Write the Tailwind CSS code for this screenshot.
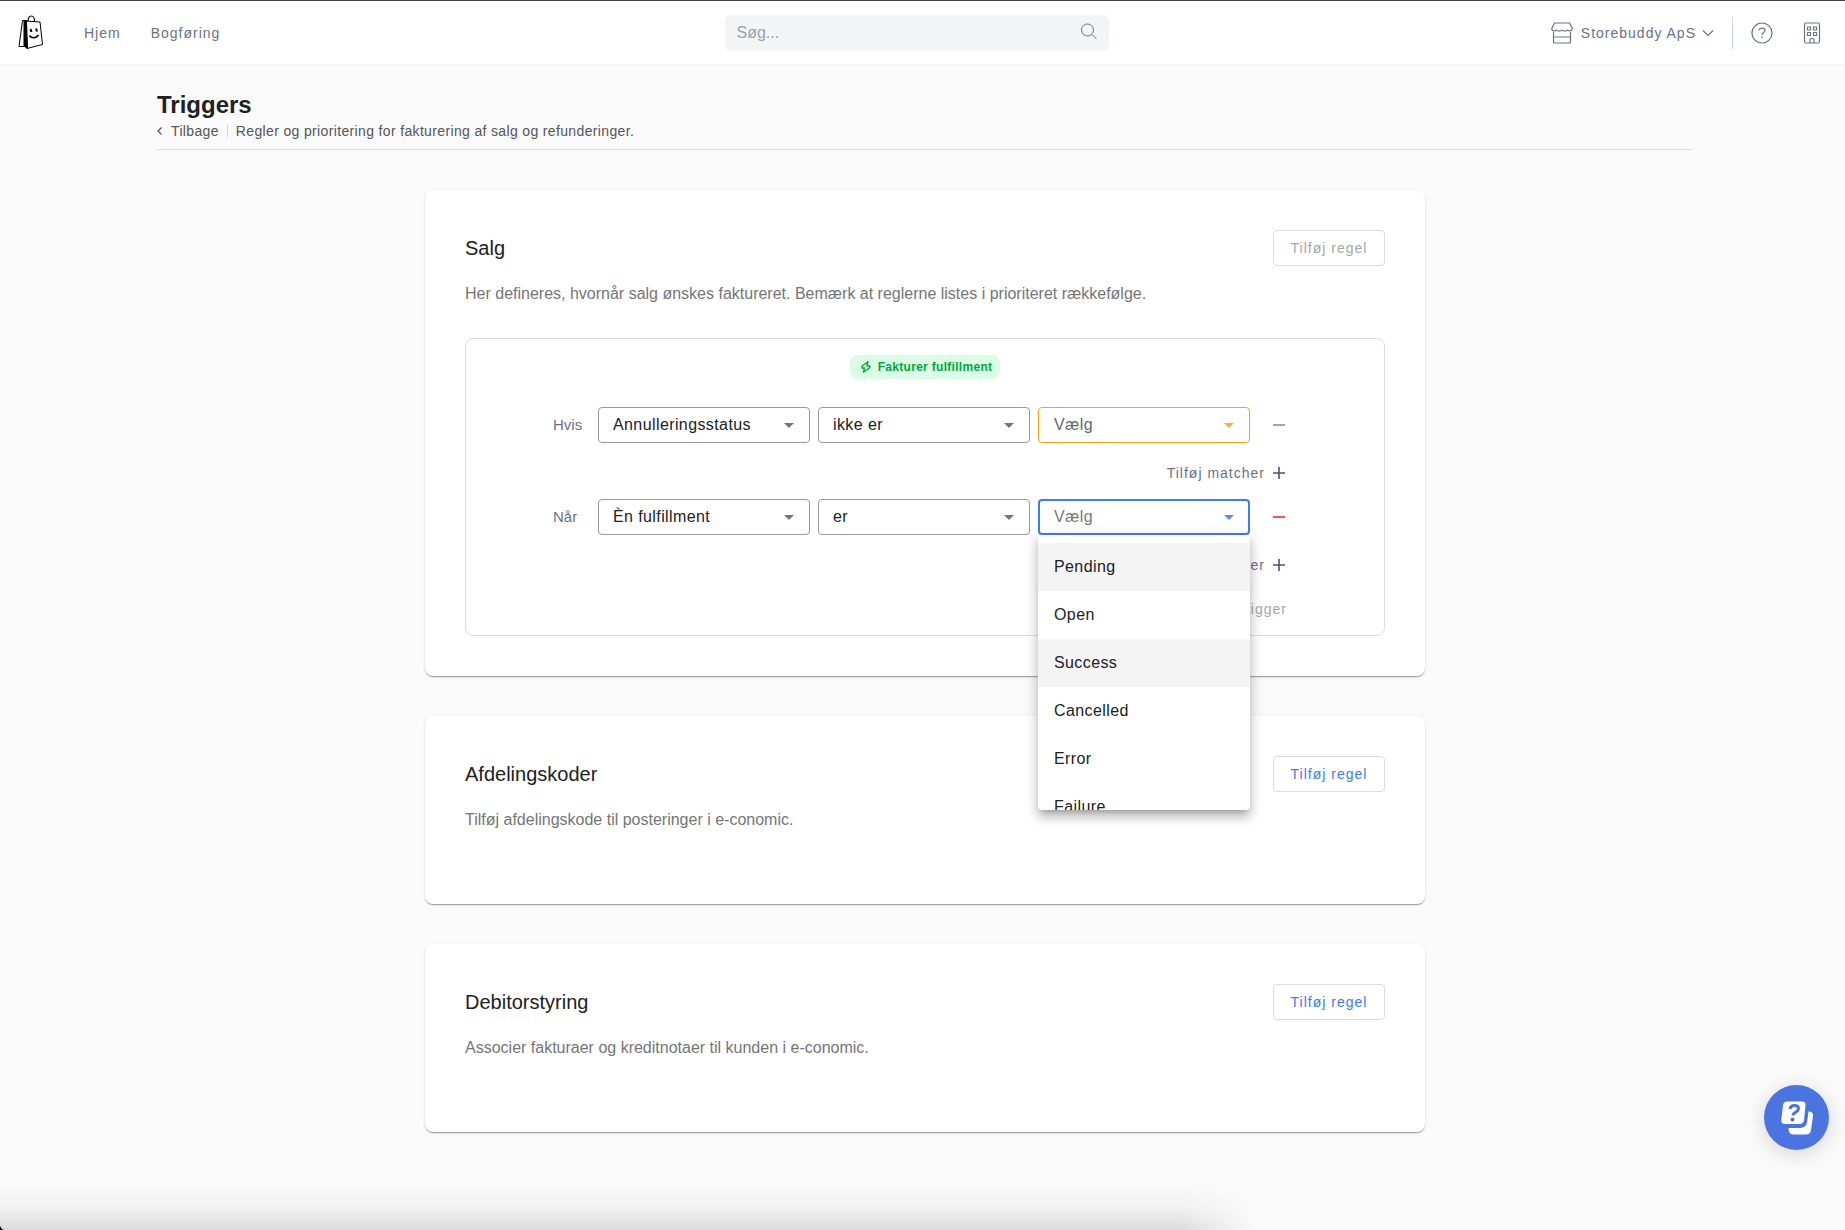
<!DOCTYPE html>
<html lang="da">
<head>
    <meta charset="UTF-8">
    <meta name="viewport" content="width=device-width, initial-scale=1.0">
    <title>Triggers</title>
    <script src="https://cdn.jsdelivr.net/npm/@tailwindcss/browser@4"></script>
</head>
<body class="relative flex flex-col min-h-screen overflow-x-hidden bg-[#fafafa] font-['Liberation_Sans',sans-serif] text-[#212121]">
    <header class="flex items-center justify-between h-[65px] pl-3 pr-6 bg-white border-t border-t-[#444] border-b border-b-gray-100 text-sm text-gray-500">
        <nav class="flex flex-1 items-center tracking-[1px]">
            <a href="#" aria-label="Storebuddy" class="ml-[3px] mr-[41px]">
                <svg class="w-7 h-9" viewBox="0 0 28 36" fill="none" stroke="#000">
                    <path d="M13 6.500C13 2.500 15 1 16.500 1S19.500 3 19.500 6" stroke-width="1.200" />
                    <path d="M10 6L25 7L27.500 29.500L12 33.500Z" fill="#fff" />
                    <path d="M9.500 5.500H7.500L4 31.500H10" />
                    <path d="M9 5.500H11.500L12.500 33.500L9 31Z" fill="#000" />
                    <path d="M14.500 20.500C16.500 23.500 21 23.500 23.500 20" stroke-width="1.600" />
                    <path d="M15.500 14L16.500 17M21 13.500L22 16.500" stroke-width="2" />
                </svg>
            </a>
            <a href="#" class="mr-[30px]">Hjem</a>
            <a href="#">Bogføring</a>
        </nav>
        <div class="relative w-96">
            <input type="search" aria-label="Søg" placeholder="Søg..." class="block w-full h-9 px-3 rounded-md bg-gray-100 text-base placeholder-gray-400 outline-none">
            <svg class="absolute right-3 top-2 w-4 h-4" viewBox="0 0 16 16" fill="none" stroke="currentColor">
                <circle cx="6.500" cy="7" r="6" />
                <path d="M11 11.500L15.500 16" />
            </svg>
        </div>
        <div class="flex flex-1 items-center justify-end">
            <button type="button" class="flex items-center tracking-[1px]">
                <svg class="w-[22px] h-[22px] mr-2" viewBox="0 0 22 22" fill="none" stroke="currentColor" stroke-width="1.200" stroke-linejoin="round">
                    <path d="M3.500 1H18.500L21.300 6.500C21.300 9.500 17.500 9.500 16.500 8C15.500 9.500 12 9.500 11 8C10 9.500 6.500 9.500 5.500 8C4.500 9.500 .7 9.500 .7 6.500Z" />
                    <path d="M2.500 10V20Q2.500 21 3.500 21H18.500Q19.500 21 19.500 20V10M2.500 15H19.500" />
                </svg>
                Storebuddy ApS
                <svg class="w-3 h-3 ml-1.5" viewBox="0 0 12 12" fill="none" stroke="currentColor" stroke-width="1.200">
                    <path d="M1 3.500L6 8.500L11 3.500" />
                </svg>
            </button>
            <span class="w-px h-8 mx-[18px] bg-gray-300"></span>
            <button type="button" aria-label="Hjælp">
                <svg class="w-[22px] h-[22px]" viewBox="0 0 22 22" fill="none" stroke="currentColor" stroke-width="1.200">
                    <circle cx="11" cy="11" r="10" />
                    <path d="M8 8.500C8 5.300 14 5.300 14 8.500C14 10.500 11 10.500 11 13" />
                    <path d="M11 14.500V16" stroke-width="1.400" />
                </svg>
            </button>
            <button type="button" aria-label="Virksomhed" class="ml-[30px]">
                <svg class="w-[18px] h-[22px]" viewBox="0 0 18 22" fill="none" stroke="currentColor" stroke-width="1.200">
                    <rect x="1.500" y="1" width="15" height="20" rx="1.500" />
                    <path d="M4.500 5h3v3h-3zM10.500 5h3v3h-3zM4.500 10.500h3v3h-3zM10.500 10.500h3v3h-3zM7 21V17.500Q7 16.500 9 16.500T11 17.500V21" />
                </svg>
            </button>
        </div>
    </header>

    <main class="w-full grow pl-[5px]">
        <div class="mx-auto max-w-[1536px] pt-6">
            <h1 class="text-2xl leading-8 font-bold">Triggers</h1>
            <div class="flex items-center h-5 text-sm tracking-wide text-[#555]">
                <a href="#" class="flex items-center">
                    <svg class="w-2 h-2 mr-1.5" viewBox="0 0 8 8" fill="none" stroke="currentColor" stroke-width="1.200">
                        <path d="M4.500 .5L1 4L4.500 7.500" />
                    </svg>
                    Tilbage
                </a>
                <span class="w-px h-3 mx-2 bg-gray-300"></span>
                <p>Regler og prioritering for fakturering af salg og refunderinger.</p>
            </div>
            <hr class="mt-2 border-[#dcdcdc]">
        </div>

        <div class="mx-auto max-w-[1000px] mt-10 flex flex-col gap-10">
            <section class="p-10 rounded-lg bg-white shadow-[0_2px_1px_-1px_rgba(0,0,0,0.2),0_1px_1px_0_rgba(0,0,0,0.14),0_1px_3px_0_rgba(0,0,0,0.12)]">
                <div class="flex items-center justify-between">
                    <h2 class="text-xl">Salg</h2>
                    <button type="button" disabled class="h-9 w-28 rounded border border-[#dcdcdc] text-sm tracking-[1px] text-[#a6a6a6]">Tilføj regel</button>
                </div>
                <p class="mt-4 mb-8 text-[#757575]">Her defineres, hvornår salg ønskes faktureret. Bemærk at reglerne listes i prioriteret rækkefølge.</p>

                <div class="rounded-lg border border-[#dcdcdc] pt-4 pb-2">
                    <div class="mx-auto flex items-center w-fit h-6 px-2 rounded-lg bg-green-100 text-xs font-bold tracking-wide text-green-600">
                        <svg class="w-3 h-3 ml-0.5 mr-1.5" viewBox="0 0 12 12" fill="none" stroke="currentColor" stroke-width="1.400" stroke-linejoin="round">
                            <path d="M8 .8L2 5.200V7H4.500L3.500 11.200L9.800 6.800V5H7Z" />
                        </svg>
                        Fakturer fulfillment
                    </div>

                    <div class="mx-auto max-w-[744px] mt-7">
                        <div class="flex items-center">
                            <span class="w-[45px] text-[15px] text-gray-500">Hvis</span>
                            <div class="grid grid-cols-3 gap-2 grow tracking-wide">
                                <div class="relative">
                                    <select aria-label="Felt" class="block w-full h-9 pl-[14px] pr-8 appearance-none rounded border border-[#999] outline-none">
                                        <option>Annulleringsstatus</option>
                                    </select>
                                    <svg class="absolute right-[9px] top-1.5 w-6 h-6 pointer-events-none text-[#757575]" viewBox="0 0 24 24" fill="currentColor"><path d="M7 10l5 5 5-5z" /></svg>
                                </div>
                                <div class="relative">
                                    <select aria-label="Operator" class="block w-full h-9 pl-[14px] pr-8 appearance-none rounded border border-[#999] outline-none">
                                        <option>ikke er</option>
                                    </select>
                                    <svg class="absolute right-[9px] top-1.5 w-6 h-6 pointer-events-none text-[#757575]" viewBox="0 0 24 24" fill="currentColor"><path d="M7 10l5 5 5-5z" /></svg>
                                </div>
                                <div class="relative">
                                    <select aria-label="Værdi" class="block w-full h-9 pl-[15px] pr-8 appearance-none rounded border border-[#f9a11b] text-[#666] outline-none">
                                        <option>Vælg</option>
                                    </select>
                                    <svg class="absolute right-[9px] top-1.5 w-6 h-6 pointer-events-none text-[#ffa73b]" viewBox="0 0 24 24" fill="currentColor"><path d="M7 10l5 5 5-5z" /></svg>
                                </div>
                            </div>
                            <button type="button" aria-label="Fjern matcher" class="flex items-center justify-center w-9 h-9 ml-[11px] text-[#a6a6a6]">
                                <svg class="w-3 h-3" viewBox="0 0 12 12" stroke="currentColor" stroke-width="2"><path d="M0 6H12" /></svg>
                            </button>
                        </div>
                        <button type="button" class="flex items-center h-9 mt-3 mb-2 ml-auto pr-3 text-sm tracking-[1px] text-gray-500">
                            Tilføj matcher
                            <svg class="w-3 h-3 ml-2 text-gray-600" viewBox="0 0 12 12" stroke="currentColor" stroke-width="1.600"><path d="M0 6H12M6 0V12" /></svg>
                        </button>

                        <div class="flex items-center">
                            <span class="w-[45px] text-[15px] text-gray-500">Når</span>
                            <div class="grid grid-cols-3 gap-2 grow tracking-wide">
                                <div class="relative">
                                    <select aria-label="Felt" class="block w-full h-9 pl-[14px] pr-8 appearance-none rounded border border-[#999] outline-none">
                                        <option>Èn fulfillment</option>
                                    </select>
                                    <svg class="absolute right-[9px] top-1.5 w-6 h-6 pointer-events-none text-[#757575]" viewBox="0 0 24 24" fill="currentColor"><path d="M7 10l5 5 5-5z" /></svg>
                                </div>
                                <div class="relative">
                                    <select aria-label="Operator" class="block w-full h-9 pl-[14px] pr-8 appearance-none rounded border border-[#999] outline-none">
                                        <option>er</option>
                                    </select>
                                    <svg class="absolute right-[9px] top-1.5 w-6 h-6 pointer-events-none text-[#757575]" viewBox="0 0 24 24" fill="currentColor"><path d="M7 10l5 5 5-5z" /></svg>
                                </div>
                                <div class="relative">
                                    <select aria-label="Værdi" class="block w-full h-9 pl-[14px] pr-8 appearance-none rounded border-2 border-[#407bf0] text-[#777] outline-none">
                                        <option>Vælg</option>
                                    </select>
                                    <svg class="absolute right-[9px] top-1.5 w-6 h-6 pointer-events-none text-[#5b8ff9]" viewBox="0 0 24 24" fill="currentColor"><path d="M7 10l5 5 5-5z" /></svg>
                                    <!-- open menu -->
                                    <ul role="listbox" aria-label="Værdi" class="absolute z-10 top-full inset-x-0 max-h-[275px] pt-2 overflow-hidden rounded-b bg-white shadow-[0_5px_5px_-3px_rgba(0,0,0,0.2),0_8px_10px_1px_rgba(0,0,0,0.14),0_3px_14px_2px_rgba(0,0,0,0.12)]">
                                        <li role="option" class="flex items-center h-12 px-4 bg-[#f4f4f4]">Pending</li>
                                        <li role="option" class="flex items-center h-12 px-4">Open</li>
                                        <li role="option" class="flex items-center h-12 px-4 bg-[#f4f4f4]">Success</li>
                                        <li role="option" class="flex items-center h-12 px-4">Cancelled</li>
                                        <li role="option" class="flex items-center h-12 px-4">Error</li>
                                        <li role="option" class="flex items-center h-12 px-4">Failure</li>
                                    </ul>
                                </div>
                            </div>
                            <button type="button" aria-label="Fjern matcher" class="flex items-center justify-center w-9 h-9 ml-[11px] text-[#fa5252]">
                                <svg class="w-3 h-3" viewBox="0 0 12 12" stroke="currentColor" stroke-width="2"><path d="M0 6H12" /></svg>
                            </button>
                        </div>
                        <button type="button" class="flex items-center h-9 mt-3 mb-2 ml-auto pr-3 text-sm tracking-[1px] text-gray-500">
                            Tilføj matcher
                            <svg class="w-3 h-3 ml-2 text-gray-600" viewBox="0 0 12 12" stroke="currentColor" stroke-width="1.600"><path d="M0 6H12M6 0V12" /></svg>
                        </button>
                        <button type="button" disabled class="flex items-center h-9 ml-auto pr-2.5 text-sm tracking-[1px] text-[#a6a6a6]">Tilføj trigger</button>
                    </div>
                </div>
            </section>

            <section class="p-10 rounded-lg bg-white shadow-[0_2px_1px_-1px_rgba(0,0,0,0.2),0_1px_1px_0_rgba(0,0,0,0.14),0_1px_3px_0_rgba(0,0,0,0.12)]">
                <div class="flex items-center justify-between">
                    <h2 class="text-xl">Afdelingskoder</h2>
                    <button type="button" class="h-9 w-28 rounded border border-[#dcdcdc] text-sm tracking-[1px] text-[#407bf0]">Tilføj regel</button>
                </div>
                <p class="mt-4 mb-8 text-[#757575]">Tilføj afdelingskode til posteringer i e-conomic.</p>
            </section>

            <section class="p-10 rounded-lg bg-white shadow-[0_2px_1px_-1px_rgba(0,0,0,0.2),0_1px_1px_0_rgba(0,0,0,0.14),0_1px_3px_0_rgba(0,0,0,0.12)]">
                <div class="flex items-center justify-between">
                    <h2 class="text-xl">Debitorstyring</h2>
                    <button type="button" class="h-9 w-28 rounded border border-[#dcdcdc] text-sm tracking-[1px] text-[#407bf0]">Tilføj regel</button>
                </div>
                <p class="mt-4 mb-8 text-[#757575]">Associer fakturaer og kreditnotaer til kunden i e-conomic.</p>
            </section>
        </div>
    </main>

    <!-- shade along the bottom edge and the dark window corner -->
    <div class="fixed bottom-0 left-0 w-[68%] h-12 pointer-events-none bg-linear-to-t from-black/12 via-black/3 to-transparent mask-r-from-94%"></div>
    <svg class="fixed bottom-0 left-0 w-1 h-1" viewBox="0 0 4 4"><path d="M0 0Q1 3 4 4H0Z" /></svg>

    <button type="button" aria-label="Hjælpecenter" class="fixed right-4 bottom-20 flex items-center justify-center w-[65px] h-[65px] rounded-full bg-[#4c74e0] shadow-[0_4px_20px_rgba(0,0,0,0.15)]">
        <svg class="w-8 h-[34px]" viewBox="0 0 32 34">
            <path d="M6 .5H21Q25 .5 24.500 4.500L23 19Q22.500 23 18.500 23H4Q0 23 .3 19L2 4.500Q2.500 .5 6 .5Z" fill="#fff" />
            <path d="M27.500 10.500Q32.500 10.500 32 15L30 29Q29.300 33.500 25 33.500H12Q7.500 33.500 7.500 27H19Q25.500 27 26.300 20Z" fill="#fff" />
            <path d="M9 8C9.500 3.500 18 3 17.500 8C17 11.500 12 11 12 14.500" fill="none" stroke="#4c74e0" stroke-width="3" />
            <circle cx="11.500" cy="18.500" r="2" fill="#4c74e0" />
        </svg>
    </button>
</body>
</html>
